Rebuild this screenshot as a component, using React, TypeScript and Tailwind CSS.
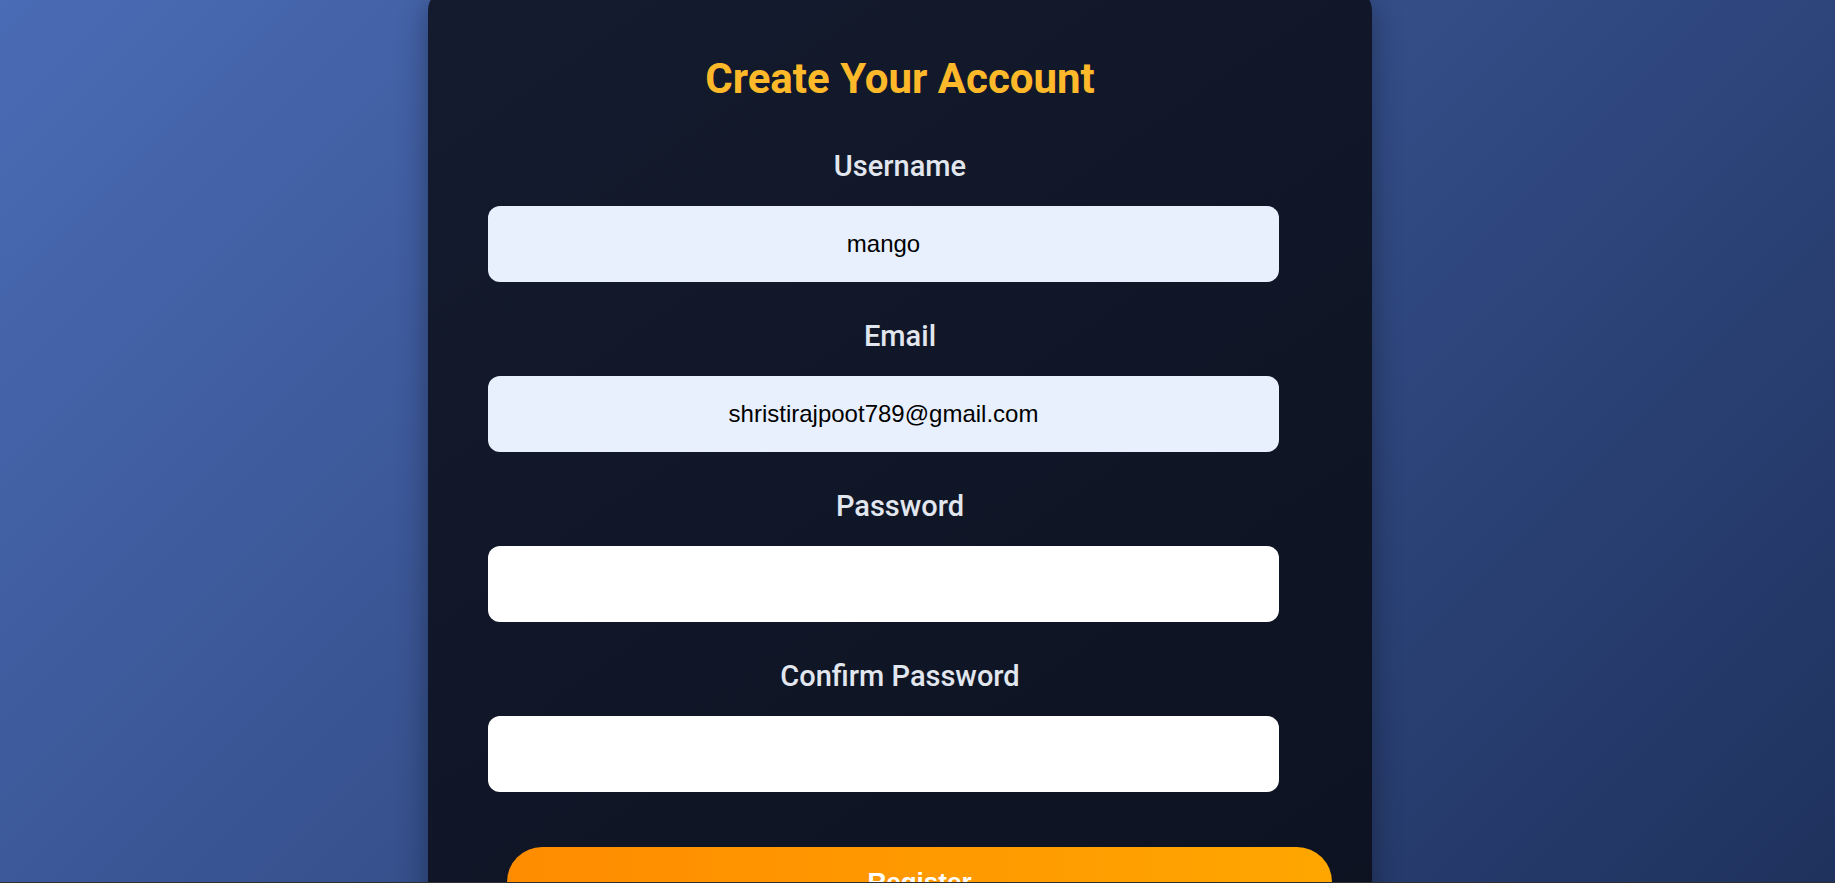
import React from "react";

const labelCls =
  "w-full text-center text-[29px] leading-[29px] font-medium text-[#e2e6ee] [font-family:Roboto,'Noto_Sans',sans-serif]";
const inputCls =
  "ml-[60px] w-[791px] h-[76px] rounded-[12px] border-0 outline-none text-center text-[24px] text-black [font-family:'Liberation_Sans',Arial,sans-serif]";

export default function App() {
  return (
    <div className="relative w-full h-[883px] overflow-hidden bg-[linear-gradient(135deg,#4a6bb5,#1f325e)] flex">
      <div className="ml-[428px] mt-[-10px] w-[944px] h-[960px] shrink-0 rounded-[20px] bg-[linear-gradient(145deg,#141b2e,#0c1220)] shadow-[0_10px_30px_rgba(0,0,0,0.35)] flex flex-col pt-[68px]">
        <h1 className="text-center text-[42px] leading-[42px] font-bold text-[#fdb92a] [font-family:Roboto,'Noto_Sans',sans-serif]">
          Create Your Account
        </h1>
        <div className="mt-[52px] flex flex-col">
          <label className={labelCls}>Username</label>
          <input className={`${inputCls} mt-[25px] bg-[#e8f0fe]`} defaultValue="mango" />
          <label className={`${labelCls} mt-[40px]`}>Email</label>
          <input
            className={`${inputCls} mt-[25px] bg-[#e8f0fe]`}
            defaultValue="shristirajpoot789@gmail.com"
          />
          <label className={`${labelCls} mt-[40px]`}>Password</label>
          <input type="password" className={`${inputCls} mt-[25px] bg-white`} />
          <label className={`${labelCls} mt-[40px]`}>Confirm Password</label>
          <input type="password" className={`${inputCls} mt-[25px] bg-white`} />
          <button className="ml-[79px] mt-[55px] w-[825px] h-[70px] rounded-[35px] bg-[linear-gradient(90deg,#ff8c00,#ffa600)] text-white text-[26px] font-bold [font-family:'Liberation_Sans',Arial,sans-serif]">
            Register
          </button>
        </div>
      </div>
      <div className="absolute bottom-0 left-0 w-full h-px bg-[#2f2f2f]" />
    </div>
  );
}
